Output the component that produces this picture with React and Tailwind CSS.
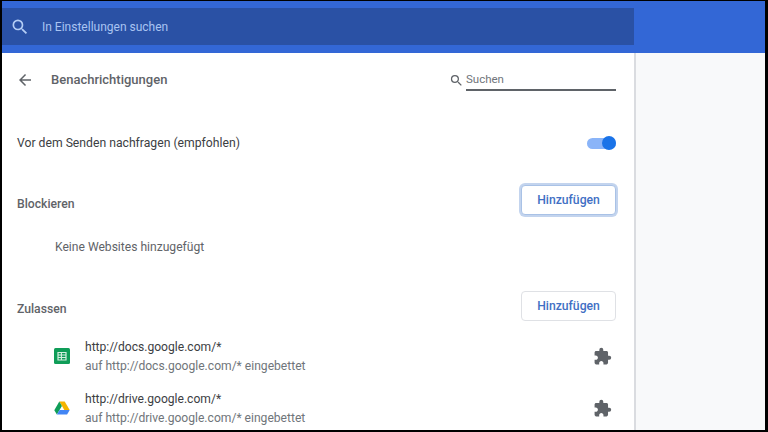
const SearchIcon = ({ className }) => (
  <svg viewBox="0 0 24 24" className={className} fill="currentColor">
    <path d="M15.5 14h-.79l-.28-.27A6.47 6.47 0 0 0 16 9.5 6.5 6.5 0 1 0 9.5 16c1.61 0 3.09-.59 4.23-1.57l.27.28v.79l5 4.99L20.49 19l-4.99-5zm-6 0C7.01 14 5 11.99 5 9.5S7.01 5 9.5 5 14 7.01 14 9.5 11.99 14 9.5 14z" />
  </svg>
);

const PuzzleIcon = () => (
  <svg viewBox="0 0 24 24" className="w-[19px] h-[19px] mr-[4px] mb-[2px] text-[#5f6368]" fill="currentColor">
    <path d="M20.5 11H19V7c0-1.1-.9-2-2-2h-4V3.5a2.5 2.5 0 0 0-5 0V5H4c-1.1 0-2 .9-2 2v3.8h1.5c1.49 0 2.7 1.21 2.7 2.7s-1.21 2.7-2.7 2.7H2V20c0 1.1.9 2 2 2h3.8v-1.5c0-1.49 1.21-2.7 2.7-2.7s2.7 1.21 2.7 2.7V22H17c1.1 0 2-.9 2-2v-4h1.5a2.5 2.5 0 0 0 0-5z" />
  </svg>
);

const SheetsIcon = () => (
  <svg viewBox="0 0 16 16" className="w-4 h-4">
    <rect width="16" height="16" rx="1.5" fill="#0f9d58" />
    <path d="M4 4.5h8v7.5H4z" fill="none" stroke="#d5eee0" strokeWidth="1.2" />
    <path d="M4 7h8M4 9.5h8M7.4 4.5V12" stroke="#d5eee0" strokeWidth="1.1" />
  </svg>
);

const DriveIcon = () => (
  <svg viewBox="0 0 16 14" className="w-4 h-[14px]">
    <path d="M5.3 0.5h5.4l5 8.6h-5.4z" fill="#f4b400" />
    <path d="M5.3 0.5 0.3 9.2l2.6 4.4 5-8.7z" fill="#0f9d58" />
    <path d="M2.9 13.6h10.2l2.6-4.5H5.5z" fill="#4285f4" />
  </svg>
);

const AddButton = ({ focused }) => (
  <button
    className={`w-[95px] h-[30px] rounded bg-white text-[12.2px] font-medium text-[#3f6fc4] border ${
      focused ? 'border-[#a9c2e6] ring-2 ring-[#c3d4ee]' : 'border-[#dfe1e5]'
    }`}
  >
    Hinzufügen
  </button>
);

const sites = [
  { url: 'http://docs.google.com/*', embed: 'auf http://docs.google.com/* eingebettet', icon: <SheetsIcon /> },
  { url: 'http://drive.google.com/*', embed: 'auf http://drive.google.com/* eingebettet', icon: <DriveIcon /> },
];

export default function App() {
  return (
    <div className="w-[768px] h-[432px] bg-black pt-px pl-[2px] pr-[3px] pb-[2px] overflow-hidden font-['Roboto',sans-serif]">
      <div className="h-full flex flex-col">
        <header className="h-[52px] shrink-0 bg-[#3367d6] pt-[7px]">
          <div className="w-[632px] h-[37px] bg-[#2a51a5] flex items-center pl-[8px] text-[#a9c4f2]">
            <SearchIcon className="w-[20px] h-[20px] text-[#b4cdf5]" />
            <span className="ml-[12px] text-[12px]">In Einstellungen suchen</span>
          </div>
        </header>

        <div className="flex flex-1 min-h-0">
          <main className="w-[634px] shrink-0 bg-white border-r-2 border-[#dadce0] pl-[15px] pr-[18px] overflow-hidden">
            <div className="h-[52px] mt-[1px] flex items-center text-[#5f6368]">
              <svg viewBox="0 0 24 24" className="w-[18px] h-[18px] -ml-[1px]" fill="currentColor">
                <path d="M20 11H7.83l5.59-5.59L12 4l-8 8 8 8 1.41-1.41L7.83 13H20v-2z" />
              </svg>
              <h1 className="ml-[17px] text-[13px] font-medium">Benachrichtigungen</h1>
              <div className="ml-auto flex items-center">
                <SearchIcon className="w-[15px] h-[15px] text-[#5f6368]" />
                <div className="ml-[2px] w-[150px] h-[22px] border-b-2 border-[#5f6368] text-[11.5px] leading-[20px] text-[#70757a]">
                  Suchen
                </div>
              </div>
            </div>

            <div className="mt-[29px] h-[16px] flex items-center justify-between text-[12.2px] text-[#3c4043]">
              <span>Vor dem Senden nachfragen (empfohlen)</span>
              <span className="relative block w-[29px] h-[14px]">
                <span className="absolute left-0 top-[2px] w-[29px] h-[11px] rounded-full bg-[#8ab4f8]" />
                <span className="absolute right-0 top-0 w-[14px] h-[14px] rounded-full bg-[#1a73e8]" />
              </span>
            </div>

            <div className="mt-[34px] h-[30px] flex items-center justify-between">
              <h2 className="mt-[8px] text-[12.2px] font-medium text-[#5f6368]">Blockieren</h2>
              <AddButton focused />
            </div>

            <p className="mt-[24px] ml-[38px] text-[12.1px] leading-[16px] text-[#5f6368]">Keine Websites hinzugefügt</p>

            <div className="mt-[36px] h-[30px] flex items-center justify-between">
              <h2 className="mt-[6px] text-[12.2px] font-medium text-[#5f6368]">Zulassen</h2>
              <AddButton />
            </div>

            <ul className="mt-[17px] flex flex-col gap-[14px]">
              {sites.map(s => (
                <li key={s.url} className="h-[38px] flex items-center">
                  <span className="w-[16px] ml-[37px] mb-[2px] flex justify-center">{s.icon}</span>
                  <div className="ml-[15px] flex-1 text-[12.1px] leading-[19px]">
                    <div className="text-[#3c4043]">{s.url}</div>
                    <div className="text-[#70757a]">{s.embed}</div>
                  </div>
                  <PuzzleIcon />
                </li>
              ))}
            </ul>
          </main>
          <aside className="flex-1 bg-[#f8f9fa]" />
        </div>
      </div>
    </div>
  );
}
